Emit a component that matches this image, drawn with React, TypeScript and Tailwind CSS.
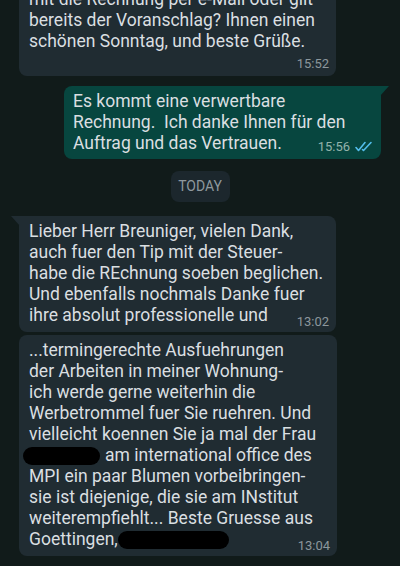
import React from "react";

const FONT = { fontFamily: "Roboto, 'Noto Sans', Arial, sans-serif" };

function Time({ t, read }: { t: string; read?: boolean }) {
  return (
    <span className="flex shrink-0 items-center gap-[5px] text-[13px] leading-none text-[#8c979c]">
      <span className={read ? "text-[#93b3ab]" : ""}>{t}</span>
      {read ? (
        <svg width="18" height="11" viewBox="0 0 18 11" fill="none">
          <path d="M1 6.5 L3.5 9.5 L10 1.5" stroke="#53bdeb" strokeWidth="1.6" strokeLinecap="round" strokeLinejoin="round" />
          <path d="M7.5 8.5 L8.5 9.5 L16 1.5" stroke="#53bdeb" strokeWidth="1.6" strokeLinecap="round" strokeLinejoin="round" />
        </svg>
      ) : null}
    </span>
  );
}

function Lines({ lines }: { lines: React.ReactNode[] }) {
  return (
    <>
      {lines.map((l, i) => (
        <div key={i} className="h-[21px] whitespace-pre leading-[21px]">
          {l}
        </div>
      ))}
    </>
  );
}

function Redact({ w }: { w: number }) {
  return (
    <span
      className="inline-block h-[18px] rounded-full bg-black align-middle"
      style={{ width: w }}
    />
  );
}

export default function App() {
  return (
    <div
      className="h-[566px] w-[400px] overflow-hidden bg-[#111b1a] text-[17.5px] text-[#dadfe1]"
      style={FONT}
    >
      <div className="flex flex-col">
        {/* incoming, cut off at top */}
        <div className="mt-[-17px] ml-[19px] w-[317px] rounded-[8px] bg-[#202c32] px-[10px] pt-[6px] pb-[3px]">
          <Lines
            lines={[
              "mit die Rechnung per e-Mail oder gilt",
              "bereits der Voranschlag? Ihnen einen",
              "schönen Sonntag, und beste Grüße.",
            ]}
          />
          <div className="mt-[5px] flex h-[16px] justify-end">
            <div className="mr-[-3px]">
              <Time t="15:52" />
            </div>
          </div>
        </div>

        {/* outgoing */}
        <div className="relative mt-[10px] ml-[64px] w-[317px] rounded-[8px] rounded-tr-none bg-[#07463f] pl-[9px] pr-[8px] pt-[5px] pb-[5px]">
          <svg className="absolute top-0 right-[-8px]" width="9" height="10" viewBox="0 0 9 10">
            <path d="M0 0 H9 L0 10 Z" fill="#07463f" />
          </svg>
          <Lines lines={["Es kommt eine verwertbare", "Rechnung.  Ich danke Ihnen für den"]} />
          <div className="flex h-[21px] items-end justify-between leading-[21px]">
            <span className="whitespace-pre">Auftrag und das Vertrauen.</span>
            <span className="mb-[1px]">
              <Time t="15:56" read />
            </span>
          </div>
        </div>

        {/* date pill */}
        <div className="mt-[12px] flex justify-center">
          <div className="flex h-[31px] w-[59px] items-center justify-center rounded-[8px] bg-[#1c272d] text-[14px] text-[#8e989d]">
            TODAY
          </div>
        </div>

        {/* incoming with tail */}
        <div className="relative mt-[14px] ml-[19px] w-[317px] rounded-[8px] rounded-tl-none bg-[#202c32] pl-[10px] pr-[7px] pt-[5px] pb-[6px]">
          <svg className="absolute top-0 left-[-8px]" width="9" height="10" viewBox="0 0 9 10">
            <path d="M9 0 H0 L9 10 Z" fill="#202c32" />
          </svg>
          <Lines
            lines={[
              "Lieber Herr Breuniger, vielen Dank,",
              "auch fuer den Tip mit der Steuer-",
              "habe die REchnung soeben beglichen.",
              "Und ebenfalls nochmals Danke fuer",
            ]}
          />
          <div className="flex h-[21px] items-end justify-between leading-[21px]">
            <span className="whitespace-pre">ihre absolut professionelle und</span>
            <span className="mb-[-2px]">
              <Time t="13:02" />
            </span>
          </div>
        </div>

        {/* incoming continued */}
        <div className="mt-[3px] ml-[19px] w-[318px] rounded-[8px] bg-[#202c32] pl-[10px] pr-[7px] pt-[5px] pb-[6px]">
          <Lines
            lines={[
              "...termingerechte Ausfuehrungen",
              "der Arbeiten in meiner Wohnung-",
              "ich werde gerne weiterhin die",
              "Werbetrommel fuer Sie ruehren. Und",
              "vielleicht koennen Sie ja mal der Frau",
              <>
                <span className="-ml-[6px] mr-[5px]">
                  <Redact w={77} />
                </span>
                am international office des
              </>,
              "MPI ein paar Blumen vorbeibringen-",
              "sie ist diejenige, die sie am INstitut",
              "weiterempfiehlt... Beste Gruesse aus",
            ]}
          />
          <div className="flex h-[21px] items-end justify-between leading-[21px]">
            <span className="whitespace-pre">
              Goettingen,
              <Redact w={111} />
            </span>
            <span className="mb-[-2px]">
              <Time t="13:04" />
            </span>
          </div>
        </div>
      </div>
    </div>
  );
}
